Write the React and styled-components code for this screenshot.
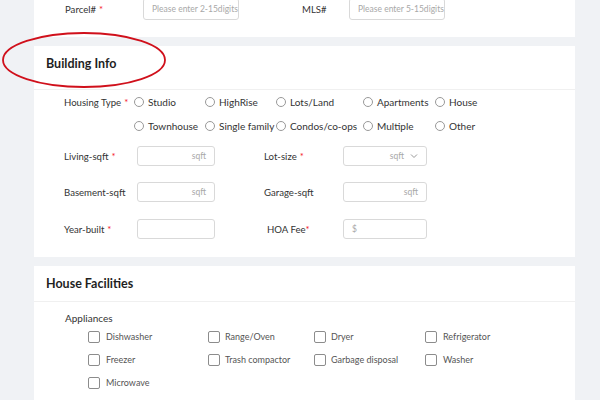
import React from "react";
import styled, { createGlobalStyle } from "styled-components";

const Global = createGlobalStyle`
  html, body { margin: 0; padding: 0; background: #f0f2f5; }
  body { font-family: Lato, "Noto Sans", sans-serif; color: #333; }
  * { box-sizing: border-box; }
`;

const Page = styled.div`
  position: relative;
  width: 600px;
  height: 400px;
  overflow: hidden;
  background: #f0f2f5;
  padding: 0 25px 0 34px;
  display: flex;
  flex-direction: column;
  gap: 9px;
`;

const Card = styled.section`
  background: #fff;
  flex-shrink: 0;
  margin-top: ${(p) => p.mt || 0}px;
  padding-bottom: ${(p) => p.pb || 0}px;
`;

const CardHeader = styled.div`
  height: ${(p) => p.h}px;
  border-bottom: 1px solid #f0f0f0;
  padding: ${(p) => p.pt}px 12px 0;
  font-size: 12.5px;
  font-weight: 700;
  color: #1f1f1f;
  line-height: 16px;
`;

const Body = styled.div`
  padding: ${(p) => p.pt || 0}px 0 0 ${(p) => p.pl || 30}px;
  display: flex;
  flex-direction: column;
`;

const Grid = styled.div`
  display: grid;
  grid-template-columns: ${(p) => p.cols};
  align-items: center;
  height: ${(p) => p.h}px;
  margin-top: ${(p) => p.mt || 0}px;
`;

const Label = styled.div`
  font-size: 9.6px;
  color: #333;
  white-space: nowrap;
  padding-left: ${(p) => p.off || 0}px;
`;

const Req = styled.span`
  color: #f5222d;
  margin-left: ${(p) => (p.tight ? 0 : 3)}px;
`;

const Input = styled.div`
  width: ${(p) => p.w}px;
  height: ${(p) => p.h || 20}px;
  border: 1px solid #d9d9d9;
  border-radius: 3px;
  display: flex;
  align-items: center;
  justify-content: ${(p) => (p.right ? "flex-end" : "flex-start")};
  padding: 0 8px 0 ${(p) => p.pl || 8}px;
  font-size: 8.5px;
  color: #a8a8a8;
  gap: 6px;
  white-space: nowrap;
`;

const RadioRows = styled.div`
  display: flex;
  flex-direction: column;
`;

const RadioRow = styled.div`
  display: grid;
  grid-template-columns: 70px 71px 71px 87px 72px auto;
  height: 24px;
  align-items: center;
`;

const Radio = styled.label`
  display: flex;
  align-items: center;
  gap: 4px;
  font-size: 10px;
  color: #333;
  white-space: nowrap;
  &::before {
    content: "";
    width: 8px;
    height: 8px;
    border: 1px solid #999;
    border-radius: 50%;
    flex-shrink: 0;
  }
`;

const SubLabel = styled.div`
  font-size: 10px;
  color: #333;
  height: 16px;
  line-height: 16px;
  padding-left: 1px;
`;

const CheckGrid = styled.div`
  display: grid;
  grid-template-columns: 120px 106px 111px auto;
  grid-auto-rows: 23px;
  align-items: center;
  padding-left: 24px;
  margin-top: -1px;
`;

const Check = styled.label`
  display: flex;
  align-items: center;
  gap: ${(p) => p.gap || 6}px;
  font-size: 9px;
  color: #555;
  white-space: nowrap;
  &::before {
    content: "";
    width: 10px;
    height: 10px;
    border: 1px solid #8c8c8c;
    border-radius: 2px;
    flex-shrink: 0;
  }
`;

const Chevron = () => (
  <svg width="8" height="6" viewBox="0 0 8 6" fill="none">
    <path d="M1 1.5 L4 4.5 L7 1.5" stroke="#999" strokeWidth="1" />
  </svg>
);

const Mark = styled.svg`
  position: absolute;
  left: 0;
  top: 0;
  pointer-events: none;
`;

export default function App() {
  return (
    <>
      <Global />
      <Page>
        <Card mt={-2} pb={17}>
          <Body pl={31}>
            <Grid cols="78px 159px 47px 96px" h={22}>
              <Label>
                Parcel#<Req>*</Req>
              </Label>
              <Input w={96} h={22}>Please enter 2-15digits</Input>
              <Label>MLS#</Label>
              <Input w={96} h={22}>Please enter 5-15digits</Input>
            </Grid>
          </Body>
        </Card>

        <Card pb={18}>
          <CardHeader h={44} pt={10}>Building Info</CardHeader>
          <Body>
            <RadioRows>
              <RadioRow>
                <Label>
                  Housing Type<Req>*</Req>
                </Label>
                <Radio>Studio</Radio>
                <Radio>HighRise</Radio>
                <Radio>Lots/Land</Radio>
                <Radio>Apartments</Radio>
                <Radio>House</Radio>
              </RadioRow>
              <RadioRow>
                <span />
                <Radio>Townhouse</Radio>
                <Radio>Single family</Radio>
                <Radio>Condos/co-ops</Radio>
                <Radio>Multiple</Radio>
                <Radio>Other</Radio>
              </RadioRow>
            </RadioRows>
            <Grid cols="73px 127px 79px 84px" h={20} mt={8}>
              <Label>
                Living-sqft<Req>*</Req>
              </Label>
              <Input w={78} right>sqft</Input>
              <Label>
                Lot-size<Req>*</Req>
              </Label>
              <Input w={84} right>
                sqft <Chevron />
              </Input>
            </Grid>
            <Grid cols="73px 127px 79px 84px" h={20} mt={16}>
              <Label>Basement-sqft</Label>
              <Input w={78} right>sqft</Input>
              <Label>Garage-sqft</Label>
              <Input w={84} right>sqft</Input>
            </Grid>
            <Grid cols="73px 127px 79px 84px" h={20} mt={17}>
              <Label>
                Year-built<Req>*</Req>
              </Label>
              <Input w={78} />
              <Label off={3}>
                HOA Fee<Req tight>*</Req>
              </Label>
              <Input w={84}>$</Input>
            </Grid>
          </Body>
        </Card>

        <Card pb={20}>
          <CardHeader h={36} pt={10}>House Facilities</CardHeader>
          <Body pt={8}>
            <SubLabel>Appliances</SubLabel>
            <CheckGrid>
              <Check>Dishwasher</Check>
              <Check gap={5}>Range/Oven</Check>
              <Check gap={5}>Dryer</Check>
              <Check gap={6}>Refrigerator</Check>
              <Check>Freezer</Check>
              <Check gap={5}>Trash compactor</Check>
              <Check gap={5}>Garbage disposal</Check>
              <Check gap={6}>Washer</Check>
              <Check>Microwave</Check>
            </CheckGrid>
          </Body>
        </Card>

        <Mark width="600" height="400">
          <ellipse cx="84" cy="60" rx="81" ry="27" fill="none" stroke="#d0101b" strokeWidth="1.8" />
        </Mark>
      </Page>
    </>
  );
}
